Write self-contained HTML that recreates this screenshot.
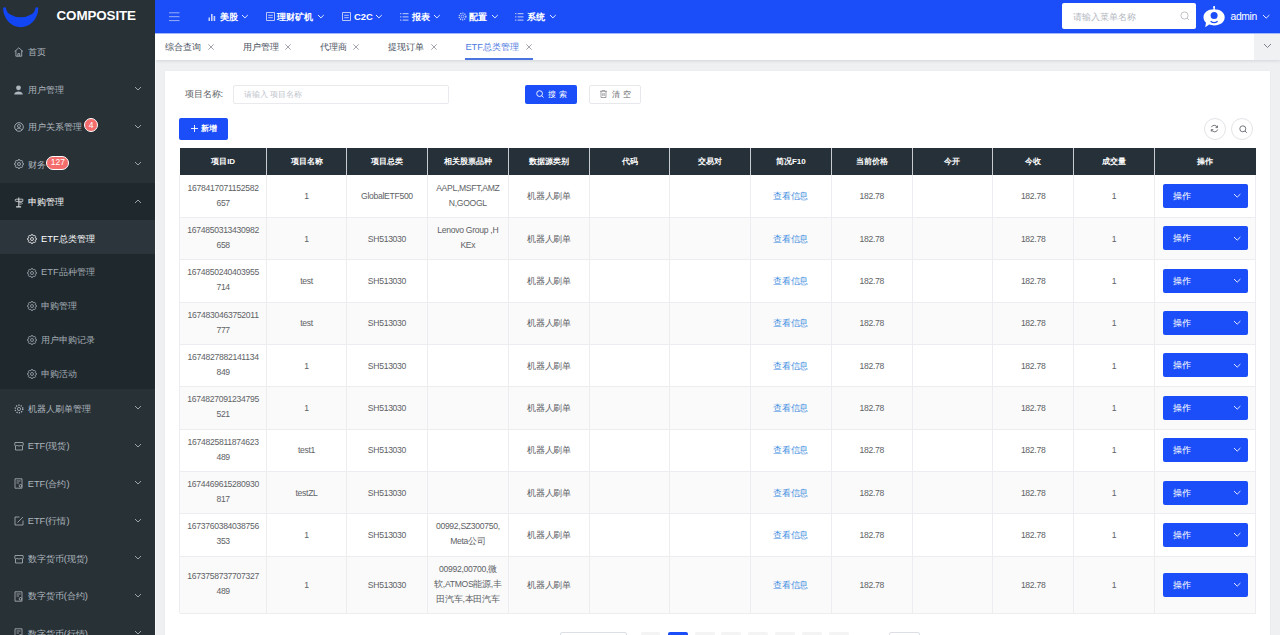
<!DOCTYPE html>
<html><head><meta charset="utf-8"><title>ETF总类管理</title>
<style>
html,body{margin:0;padding:0;}
body{width:1280px;height:635px;overflow:hidden;position:relative;background:#eef0f2;font-family:'Liberation Sans', sans-serif;}
</style></head><body>
<div id="side" style="position:absolute;left:0;top:0;width:155px;height:635px;background:#283136">
<div style="position:absolute;left:0;top:0;width:155px;height:33px;background:#283136"></div>
<svg style="position:absolute;left:0;top:0" width="42" height="32"><path d="M3.1,8 A17.6,19.2 0 0 0 38.3,8 C37.8,7 35.9,7 35.4,8 A14.7,9.3 0 0 1 6,8 C5.5,7 3.6,7 3.1,8 Z" fill="#1246f5"/></svg>
<div style="position:absolute;left:56.5px;top:8px;font:bold 13.4px/16px 'Liberation Sans', sans-serif;color:#fff;letter-spacing:-0.1px">COMPOSITE</div>
<svg style="position:absolute;left:14px;top:46.55px" width="10" height="10" viewBox="0 0 10 10"><path d="M0.6,4.6 L4.8,0.8 L9,4.6 M1.9,3.6 V9.2 H7.7 V3.6 M3.9,9.2 V6.6 H5.7 V9.2" fill="none" stroke="#aeb6be" stroke-width="0.85" stroke-linejoin="round"/></svg>
<div style="position:absolute;left:27.7px;top:46.15px;height:12px;font:normal 9.33px/12px 'Liberation Sans', sans-serif;color:#aeb6be;white-space:nowrap">首页</div>
<svg style="position:absolute;left:14px;top:84.55px" width="9" height="10" viewBox="0 0 9 10"><circle cx="4.5" cy="2.8" r="2.4" fill="#aeb6be"/><path d="M0.2,9.5 C0.2,5.5 8.8,5.5 8.8,9.5 Z" fill="#aeb6be"/></svg>
<div style="position:absolute;left:27.7px;top:83.64999999999999px;height:12px;font:normal 9.33px/12px 'Liberation Sans', sans-serif;color:#aeb6be;white-space:nowrap">用户管理</div>
<svg style="position:absolute;left:134.5px;top:87.25px;overflow:visible" width="6" height="3.0"><path d="M0,0 L3.0,3.0 L6,0" fill="none" stroke="#9aa3ab" stroke-width="1"/></svg>
<svg style="position:absolute;left:14px;top:122.05px" width="10" height="10" viewBox="0 0 10 10"><circle cx="5" cy="5" r="4.3" fill="none" stroke="#aeb6be" stroke-width="0.9"/><circle cx="5" cy="4" r="1.5" fill="none" stroke="#aeb6be" stroke-width="0.8"/><path d="M2.3,7.8 C3,5.8 7,5.8 7.7,7.8" fill="none" stroke="#aeb6be" stroke-width="0.8"/></svg>
<div style="position:absolute;left:27.7px;top:121.14999999999999px;height:12px;font:normal 9.33px/12px 'Liberation Sans', sans-serif;color:#aeb6be;white-space:nowrap">用户关系管理</div>
<svg style="position:absolute;left:134.5px;top:124.75px;overflow:visible" width="6" height="3.0"><path d="M0,0 L3.0,3.0 L6,0" fill="none" stroke="#9aa3ab" stroke-width="1"/></svg>
<svg style="position:absolute;left:14px;top:159.05px" width="10" height="10" viewBox="0 0 10 10"><path d="M8.63,4.28 L9.56,4.37 L9.56,5.63 L8.63,5.72 L8.08,7.06 L8.67,7.78 L7.78,8.67 L7.06,8.08 L5.72,8.63 L5.63,9.56 L4.37,9.56 L4.28,8.63 L2.94,8.08 L2.22,8.67 L1.33,7.78 L1.92,7.06 L1.37,5.72 L0.44,5.63 L0.44,4.37 L1.37,4.28 L1.92,2.94 L1.33,2.22 L2.22,1.33 L2.94,1.92 L4.28,1.37 L4.37,0.44 L5.63,0.44 L5.72,1.37 L7.06,1.92 L7.78,1.33 L8.67,2.22 L8.08,2.94 Z" fill="none" stroke="#aeb6be" stroke-width="0.85" stroke-linejoin="round"/><circle cx="5" cy="5" r="1.5" fill="none" stroke="#aeb6be" stroke-width="0.85"/></svg>
<div style="position:absolute;left:27.7px;top:158.65px;height:12px;font:normal 9.33px/12px 'Liberation Sans', sans-serif;color:#aeb6be;white-space:nowrap">财务</div>
<svg style="position:absolute;left:134.5px;top:162.25px;overflow:visible" width="6" height="3.0"><path d="M0,0 L3.0,3.0 L6,0" fill="none" stroke="#9aa3ab" stroke-width="1"/></svg>
<div style="position:absolute;left:84px;top:118.2px;width:12px;height:12px;border:1px solid #fff;border-radius:8px;background:#f56c6c;color:#fff;font:8.5px/12px 'Liberation Sans', sans-serif;text-align:center">4</div>
<div style="position:absolute;left:46.3px;top:156px;width:21px;height:11.6px;border:1px solid #fff;border-radius:7px;background:#f56c6c;color:#fff;font:8.5px/11.6px 'Liberation Sans', sans-serif;text-align:center">127</div>
<div style="position:absolute;left:0;top:182.8px;width:155px;height:37.5px;background:#1f282d"></div>
<svg style="position:absolute;left:14px;top:196.85000000000002px" width="10" height="11" viewBox="0 0 10 11"><path d="M0.8,3.3 L2,2.2 H8.8 V4.4 H2 Z" fill="none" stroke="#d5d9dd" stroke-width="0.8"/><path d="M4.3,0.5 H5.3 V9.5 H4.3 Z M2.1,9.3 H7.1 V10.6 H2.1 Z" fill="#d5d9dd"/><path d="M5.3,5.5 H7.5 L8.3,6.3 L7.5,7.1 H5.3" fill="none" stroke="#d5d9dd" stroke-width="0.7"/></svg>
<div style="position:absolute;left:27.7px;top:196.15px;height:12px;font:normal 9.33px/12px 'Liberation Sans', sans-serif;color:#fff;white-space:nowrap">申购管理</div>
<svg style="position:absolute;left:134.5px;top:199.55px;overflow:visible" width="6" height="3.0"><path d="M0,3.0 L3.0,0 L6,3.0" fill="none" stroke="#9aa3ab" stroke-width="1"/></svg>
<div style="position:absolute;left:0;top:220.3px;width:155px;height:169.0px;background:#1f282d"></div>
<div style="position:absolute;left:0;top:220.3px;width:155px;height:33.8px;background:#2c353b"></div>
<svg style="position:absolute;left:27.2px;top:233.70000000000002px" width="10" height="10" viewBox="0 0 10 10"><path d="M8.63,4.28 L9.56,4.37 L9.56,5.63 L8.63,5.72 L8.08,7.06 L8.67,7.78 L7.78,8.67 L7.06,8.08 L5.72,8.63 L5.63,9.56 L4.37,9.56 L4.28,8.63 L2.94,8.08 L2.22,8.67 L1.33,7.78 L1.92,7.06 L1.37,5.72 L0.44,5.63 L0.44,4.37 L1.37,4.28 L1.92,2.94 L1.33,2.22 L2.22,1.33 L2.94,1.92 L4.28,1.37 L4.37,0.44 L5.63,0.44 L5.72,1.37 L7.06,1.92 L7.78,1.33 L8.67,2.22 L8.08,2.94 Z" fill="none" stroke="#e8ebee" stroke-width="0.85" stroke-linejoin="round"/><circle cx="5" cy="5" r="1.5" fill="none" stroke="#e8ebee" stroke-width="0.85"/></svg>
<div style="position:absolute;left:41px;top:232.50000000000003px;height:12px;font:normal 9.33px/12px 'Liberation Sans', sans-serif;color:#ffffff;white-space:nowrap">ETF总类管理</div>
<svg style="position:absolute;left:27.2px;top:267.5px" width="10" height="10" viewBox="0 0 10 10"><path d="M8.63,4.28 L9.56,4.37 L9.56,5.63 L8.63,5.72 L8.08,7.06 L8.67,7.78 L7.78,8.67 L7.06,8.08 L5.72,8.63 L5.63,9.56 L4.37,9.56 L4.28,8.63 L2.94,8.08 L2.22,8.67 L1.33,7.78 L1.92,7.06 L1.37,5.72 L0.44,5.63 L0.44,4.37 L1.37,4.28 L1.92,2.94 L1.33,2.22 L2.22,1.33 L2.94,1.92 L4.28,1.37 L4.37,0.44 L5.63,0.44 L5.72,1.37 L7.06,1.92 L7.78,1.33 L8.67,2.22 L8.08,2.94 Z" fill="none" stroke="#9aa3ab" stroke-width="0.85" stroke-linejoin="round"/><circle cx="5" cy="5" r="1.5" fill="none" stroke="#9aa3ab" stroke-width="0.85"/></svg>
<div style="position:absolute;left:41px;top:266.3px;height:12px;font:normal 9.33px/12px 'Liberation Sans', sans-serif;color:#a4acb4;white-space:nowrap">ETF品种管理</div>
<svg style="position:absolute;left:27.2px;top:301.3px" width="10" height="10" viewBox="0 0 10 10"><path d="M8.63,4.28 L9.56,4.37 L9.56,5.63 L8.63,5.72 L8.08,7.06 L8.67,7.78 L7.78,8.67 L7.06,8.08 L5.72,8.63 L5.63,9.56 L4.37,9.56 L4.28,8.63 L2.94,8.08 L2.22,8.67 L1.33,7.78 L1.92,7.06 L1.37,5.72 L0.44,5.63 L0.44,4.37 L1.37,4.28 L1.92,2.94 L1.33,2.22 L2.22,1.33 L2.94,1.92 L4.28,1.37 L4.37,0.44 L5.63,0.44 L5.72,1.37 L7.06,1.92 L7.78,1.33 L8.67,2.22 L8.08,2.94 Z" fill="none" stroke="#9aa3ab" stroke-width="0.85" stroke-linejoin="round"/><circle cx="5" cy="5" r="1.5" fill="none" stroke="#9aa3ab" stroke-width="0.85"/></svg>
<div style="position:absolute;left:41px;top:300.1px;height:12px;font:normal 9.33px/12px 'Liberation Sans', sans-serif;color:#a4acb4;white-space:nowrap">申购管理</div>
<svg style="position:absolute;left:27.2px;top:335.1px" width="10" height="10" viewBox="0 0 10 10"><path d="M8.63,4.28 L9.56,4.37 L9.56,5.63 L8.63,5.72 L8.08,7.06 L8.67,7.78 L7.78,8.67 L7.06,8.08 L5.72,8.63 L5.63,9.56 L4.37,9.56 L4.28,8.63 L2.94,8.08 L2.22,8.67 L1.33,7.78 L1.92,7.06 L1.37,5.72 L0.44,5.63 L0.44,4.37 L1.37,4.28 L1.92,2.94 L1.33,2.22 L2.22,1.33 L2.94,1.92 L4.28,1.37 L4.37,0.44 L5.63,0.44 L5.72,1.37 L7.06,1.92 L7.78,1.33 L8.67,2.22 L8.08,2.94 Z" fill="none" stroke="#9aa3ab" stroke-width="0.85" stroke-linejoin="round"/><circle cx="5" cy="5" r="1.5" fill="none" stroke="#9aa3ab" stroke-width="0.85"/></svg>
<div style="position:absolute;left:41px;top:333.90000000000003px;height:12px;font:normal 9.33px/12px 'Liberation Sans', sans-serif;color:#a4acb4;white-space:nowrap">用户申购记录</div>
<svg style="position:absolute;left:27.2px;top:368.90000000000003px" width="10" height="10" viewBox="0 0 10 10"><path d="M8.63,4.28 L9.56,4.37 L9.56,5.63 L8.63,5.72 L8.08,7.06 L8.67,7.78 L7.78,8.67 L7.06,8.08 L5.72,8.63 L5.63,9.56 L4.37,9.56 L4.28,8.63 L2.94,8.08 L2.22,8.67 L1.33,7.78 L1.92,7.06 L1.37,5.72 L0.44,5.63 L0.44,4.37 L1.37,4.28 L1.92,2.94 L1.33,2.22 L2.22,1.33 L2.94,1.92 L4.28,1.37 L4.37,0.44 L5.63,0.44 L5.72,1.37 L7.06,1.92 L7.78,1.33 L8.67,2.22 L8.08,2.94 Z" fill="none" stroke="#9aa3ab" stroke-width="0.85" stroke-linejoin="round"/><circle cx="5" cy="5" r="1.5" fill="none" stroke="#9aa3ab" stroke-width="0.85"/></svg>
<div style="position:absolute;left:41px;top:367.70000000000005px;height:12px;font:normal 9.33px/12px 'Liberation Sans', sans-serif;color:#a4acb4;white-space:nowrap">申购活动</div>
<svg style="position:absolute;left:14px;top:403.55000000000007px" width="10" height="10" viewBox="0 0 10 10"><circle cx="5" cy="5" r="3.8" fill="none" stroke="#aeb6be" stroke-width="1.4" stroke-dasharray="1.2 1.2"/><circle cx="5" cy="5" r="1.6" fill="none" stroke="#aeb6be" stroke-width="0.8"/></svg>
<div style="position:absolute;left:27.7px;top:402.6500000000001px;height:12px;font:normal 9.33px/12px 'Liberation Sans', sans-serif;color:#aeb6be;white-space:nowrap">机器人刷单管理</div>
<svg style="position:absolute;left:134.5px;top:406.25000000000006px;overflow:visible" width="6" height="3.0"><path d="M0,0 L3.0,3.0 L6,0" fill="none" stroke="#9aa3ab" stroke-width="1"/></svg>
<svg style="position:absolute;left:14px;top:441.05000000000007px" width="10" height="10" viewBox="0 0 10 10"><path d="M1,1.5 H9 L9.3,4 C9.3,5 8,5.2 7,4.3 C6,5.2 4,5.2 3,4.3 C2,5.2 0.7,5 0.7,4 Z M1.5,5 V9 H8.5 V5" fill="none" stroke="#aeb6be" stroke-width="0.8"/></svg>
<div style="position:absolute;left:27.7px;top:440.1500000000001px;height:12px;font:normal 9.33px/12px 'Liberation Sans', sans-serif;color:#aeb6be;white-space:nowrap">ETF(现货)</div>
<svg style="position:absolute;left:134.5px;top:443.75000000000006px;overflow:visible" width="6" height="3.0"><path d="M0,0 L3.0,3.0 L6,0" fill="none" stroke="#9aa3ab" stroke-width="1"/></svg>
<svg style="position:absolute;left:14px;top:478.05000000000007px" width="10" height="11" viewBox="0 0 10 11"><path d="M1,0.8 H8 V10.2 H1 Z M2.5,3 H6.5 M2.5,5 H5" fill="none" stroke="#aeb6be" stroke-width="0.8"/><circle cx="6.5" cy="7.8" r="1.3" fill="none" stroke="#aeb6be" stroke-width="0.8"/></svg>
<div style="position:absolute;left:27.7px;top:477.6500000000001px;height:12px;font:normal 9.33px/12px 'Liberation Sans', sans-serif;color:#aeb6be;white-space:nowrap">ETF(合约)</div>
<svg style="position:absolute;left:134.5px;top:481.25000000000006px;overflow:visible" width="6" height="3.0"><path d="M0,0 L3.0,3.0 L6,0" fill="none" stroke="#9aa3ab" stroke-width="1"/></svg>
<svg style="position:absolute;left:14px;top:516.0500000000001px" width="10" height="10" viewBox="0 0 10 10"><path d="M5.5,1 H1 V9 H9 V4.5 M3.5,6.5 L9,1" fill="none" stroke="#aeb6be" stroke-width="0.8"/></svg>
<div style="position:absolute;left:27.7px;top:515.1500000000001px;height:12px;font:normal 9.33px/12px 'Liberation Sans', sans-serif;color:#aeb6be;white-space:nowrap">ETF(行情)</div>
<svg style="position:absolute;left:134.5px;top:518.7500000000001px;overflow:visible" width="6" height="3.0"><path d="M0,0 L3.0,3.0 L6,0" fill="none" stroke="#9aa3ab" stroke-width="1"/></svg>
<svg style="position:absolute;left:14px;top:553.5500000000001px" width="10" height="10" viewBox="0 0 10 10"><path d="M1,1.5 H9 L9.3,4 C9.3,5 8,5.2 7,4.3 C6,5.2 4,5.2 3,4.3 C2,5.2 0.7,5 0.7,4 Z M1.5,5 V9 H8.5 V5" fill="none" stroke="#aeb6be" stroke-width="0.8"/></svg>
<div style="position:absolute;left:27.7px;top:552.6500000000001px;height:12px;font:normal 9.33px/12px 'Liberation Sans', sans-serif;color:#aeb6be;white-space:nowrap">数字货币(现货)</div>
<svg style="position:absolute;left:134.5px;top:556.2500000000001px;overflow:visible" width="6" height="3.0"><path d="M0,0 L3.0,3.0 L6,0" fill="none" stroke="#9aa3ab" stroke-width="1"/></svg>
<svg style="position:absolute;left:14px;top:590.5500000000001px" width="10" height="11" viewBox="0 0 10 11"><path d="M1,0.8 H8 V10.2 H1 Z M2.5,3 H6.5 M2.5,5 H5" fill="none" stroke="#aeb6be" stroke-width="0.8"/><circle cx="6.5" cy="7.8" r="1.3" fill="none" stroke="#aeb6be" stroke-width="0.8"/></svg>
<div style="position:absolute;left:27.7px;top:590.1500000000001px;height:12px;font:normal 9.33px/12px 'Liberation Sans', sans-serif;color:#aeb6be;white-space:nowrap">数字货币(合约)</div>
<svg style="position:absolute;left:134.5px;top:593.7500000000001px;overflow:visible" width="6" height="3.0"><path d="M0,0 L3.0,3.0 L6,0" fill="none" stroke="#9aa3ab" stroke-width="1"/></svg>
<svg style="position:absolute;left:14px;top:628.0500000000001px" width="10" height="11" viewBox="0 0 10 11"><path d="M1,0.8 H8 V10.2 H1 Z M2.5,3 H6.5 M2.5,5 H5" fill="none" stroke="#aeb6be" stroke-width="0.8"/><circle cx="6.5" cy="7.8" r="1.3" fill="none" stroke="#aeb6be" stroke-width="0.8"/></svg>
<div style="position:absolute;left:27.7px;top:627.6500000000001px;height:12px;font:normal 9.33px/12px 'Liberation Sans', sans-serif;color:#aeb6be;white-space:nowrap">数字货币(行情)</div>
<svg style="position:absolute;left:134.5px;top:631.2500000000001px;overflow:visible" width="6" height="3.0"><path d="M0,0 L3.0,3.0 L6,0" fill="none" stroke="#9aa3ab" stroke-width="1"/></svg>
</div>
<div style="position:absolute;left:155px;top:0;width:1125px;height:33px;background:#1b4ef9"></div>
<svg style="position:absolute;left:169px;top:12px" width="11" height="10"><path d="M0,0.8 H10.5 M0,4.7 H10.5 M0,8.6 H10.5" stroke="#a9b9f6" stroke-width="0.9"/></svg>
<svg style="position:absolute;left:208px;top:12.5px" width="8" height="8"><path d="M0.5,8 V4.5 H2 V8 M3,8 V1 H4.6 V8 M5.6,8 V3 H7.2 V8" fill="#c9d3f7"/></svg>
<div style="position:absolute;left:219.7px;top:10.5px;font:bold 9.4px/12px 'Liberation Sans', sans-serif;color:#fff;white-space:nowrap">美股</div>
<svg style="position:absolute;left:241.6px;top:14.6px;overflow:visible" width="5.8" height="2.9"><path d="M0,0 L2.9,2.9 L5.8,0" fill="none" stroke="#e6ebfd" stroke-width="1"/></svg>
<svg style="position:absolute;left:266.3px;top:12px" width="9" height="9"><path d="M0.5,0.5 H8.5 V8.5 H0.5 Z M2.2,3.3 H6.8 M2.2,5.7 H6.8" fill="none" stroke="#c9d3f7" stroke-width="0.9"/></svg>
<div style="position:absolute;left:277.2px;top:10.5px;font:bold 9.4px/12px 'Liberation Sans', sans-serif;color:#fff;white-space:nowrap">理财矿机</div>
<svg style="position:absolute;left:318.4px;top:14.6px;overflow:visible" width="5.8" height="2.9"><path d="M0,0 L2.9,2.9 L5.8,0" fill="none" stroke="#e6ebfd" stroke-width="1"/></svg>
<svg style="position:absolute;left:342.3px;top:12px" width="9" height="9"><path d="M0.5,0.5 H8.5 V8.5 H0.5 Z M2.2,3.3 H6.8 M2.2,5.7 H6.8" fill="none" stroke="#c9d3f7" stroke-width="0.9"/></svg>
<div style="position:absolute;left:354px;top:10.5px;font:bold 9.4px/12px 'Liberation Sans', sans-serif;color:#fff;white-space:nowrap">C2C</div>
<svg style="position:absolute;left:376px;top:14.6px;overflow:visible" width="5.8" height="2.9"><path d="M0,0 L2.9,2.9 L5.8,0" fill="none" stroke="#e6ebfd" stroke-width="1"/></svg>
<svg style="position:absolute;left:400.3px;top:12.5px" width="9" height="8"><path d="M0,0.7 H1.4 M2.6,0.7 H8.5 M0,3.9 H1.4 M2.6,3.9 H8.5 M0,7.1 H1.4 M2.6,7.1 H8.5" fill="none" stroke="#c9d3f7" stroke-width="1"/></svg>
<div style="position:absolute;left:412px;top:10.5px;font:bold 9.4px/12px 'Liberation Sans', sans-serif;color:#fff;white-space:nowrap">报表</div>
<svg style="position:absolute;left:434px;top:14.6px;overflow:visible" width="5.8" height="2.9"><path d="M0,0 L2.9,2.9 L5.8,0" fill="none" stroke="#e6ebfd" stroke-width="1"/></svg>
<svg style="position:absolute;left:458px;top:12px" width="9" height="9" viewBox="0 0 10 10"><circle cx="5" cy="5" r="3.7" fill="none" stroke="#c9d3f7" stroke-width="1.5" stroke-dasharray="1.3 1.1"/><circle cx="5" cy="5" r="1.6" fill="none" stroke="#c9d3f7" stroke-width="0.8"/></svg>
<div style="position:absolute;left:469.4px;top:10.5px;font:bold 9.4px/12px 'Liberation Sans', sans-serif;color:#fff;white-space:nowrap">配置</div>
<svg style="position:absolute;left:491.7px;top:14.6px;overflow:visible" width="5.8" height="2.9"><path d="M0,0 L2.9,2.9 L5.8,0" fill="none" stroke="#e6ebfd" stroke-width="1"/></svg>
<svg style="position:absolute;left:515.2px;top:12.5px" width="9" height="8"><path d="M0,0.7 H1.4 M2.6,0.7 H8.5 M0,3.9 H1.4 M2.6,3.9 H8.5 M0,7.1 H1.4 M2.6,7.1 H8.5" fill="none" stroke="#c9d3f7" stroke-width="1"/></svg>
<div style="position:absolute;left:526.9px;top:10.5px;font:bold 9.4px/12px 'Liberation Sans', sans-serif;color:#fff;white-space:nowrap">系统</div>
<svg style="position:absolute;left:549.5px;top:14.6px;overflow:visible" width="5.8" height="2.9"><path d="M0,0 L2.9,2.9 L5.8,0" fill="none" stroke="#e6ebfd" stroke-width="1"/></svg>
<div style="position:absolute;left:1062.2px;top:2.7px;width:134.3px;height:26.6px;background:#fff;border-radius:2px"></div>
<div style="position:absolute;left:1073.4px;top:10.5px;font:9.33px/12px 'Liberation Sans', sans-serif;color:#b4b8bf;white-space:nowrap">请输入菜单名称</div>
<svg style="position:absolute;left:1179.5px;top:11.3px" width="10" height="10"><circle cx="4.5" cy="4.5" r="3.6" fill="none" stroke="#b8bcc3" stroke-width="0.9"/><path d="M7.1,7.1 L9,9" stroke="#b8bcc3" stroke-width="0.9"/></svg>
<svg style="position:absolute;left:1202.5px;top:5.5px" width="23" height="22" viewBox="0 0 23 22"><path d="M11.1,0.8 V4" stroke="#fff" stroke-width="1.4"/><circle cx="11.1" cy="1" r="1" fill="#fff"/><path d="M11.1,3.2 C17.3,3.2 21.7,6.5 21.7,11.3 C21.7,16.2 17.3,19.4 11.1,19.4 C9.3,19.4 7.6,19.1 6.2,18.6 L2.2,21.2 L3,16.8 C1.4,15.3 0.5,13.5 0.5,11.3 C0.5,6.5 4.9,3.2 11.1,3.2 Z" fill="#fff"/><circle cx="11.1" cy="9.6" r="3.5" fill="#1b4ef9"/><path d="M7.6,15.2 C9.6,16.8 12.6,16.8 14.6,15.2" fill="none" stroke="#1b4ef9" stroke-width="1.3"/></svg>
<div style="position:absolute;left:1230.6px;top:10.5px;font:10.3px/12px 'Liberation Sans', sans-serif;color:#fff;letter-spacing:-0.35px">admin</div>
<svg style="position:absolute;left:1263px;top:15px;overflow:visible" width="6.4" height="3.2"><path d="M0,0 L3.2,3.2 L6.4,0" fill="none" stroke="#e6ebfd" stroke-width="1"/></svg>
<div style="position:absolute;left:155px;top:33px;width:1125px;height:27px;background:#fff;box-shadow:0 1px 3px rgba(0,21,41,0.12)"></div>
<div style="position:absolute;left:155px;top:33px;width:1125px;height:1px;background:rgba(28,78,250,0.4)"></div>
<div style="position:absolute;left:1254px;top:34px;width:26px;height:26px;background:#eff1f3"></div>
<svg style="position:absolute;left:1263.6px;top:43.8px;overflow:visible" width="7" height="3.5"><path d="M0,0 L3.5,3.5 L7,0" fill="none" stroke="#7d828a" stroke-width="1"/></svg>
<div style="position:absolute;left:164.9px;top:40.9px;font:9.33px/12px 'Liberation Sans', sans-serif;color:#495060;white-space:nowrap">综合查询</div>
<svg style="position:absolute;left:208px;top:44px" width="6" height="6"><path d="M0.3,0.3 L5.7,5.7 M5.7,0.3 L0.3,5.7" stroke="#8a8f97" stroke-width="0.8"/></svg>
<div style="position:absolute;left:242.6px;top:40.9px;font:9.33px/12px 'Liberation Sans', sans-serif;color:#495060;white-space:nowrap">用户管理</div>
<svg style="position:absolute;left:285.4px;top:44px" width="6" height="6"><path d="M0.3,0.3 L5.7,5.7 M5.7,0.3 L0.3,5.7" stroke="#8a8f97" stroke-width="0.8"/></svg>
<div style="position:absolute;left:319.7px;top:40.9px;font:9.33px/12px 'Liberation Sans', sans-serif;color:#495060;white-space:nowrap">代理商</div>
<svg style="position:absolute;left:353.4px;top:44px" width="6" height="6"><path d="M0.3,0.3 L5.7,5.7 M5.7,0.3 L0.3,5.7" stroke="#8a8f97" stroke-width="0.8"/></svg>
<div style="position:absolute;left:388px;top:40.9px;font:9.33px/12px 'Liberation Sans', sans-serif;color:#495060;white-space:nowrap">提现订单</div>
<svg style="position:absolute;left:430.7px;top:44px" width="6" height="6"><path d="M0.3,0.3 L5.7,5.7 M5.7,0.3 L0.3,5.7" stroke="#8a8f97" stroke-width="0.8"/></svg>
<div style="position:absolute;left:465.4px;top:40.9px;font:9.33px/12px 'Liberation Sans', sans-serif;color:#4f7be0;white-space:nowrap">ETF总类管理</div>
<svg style="position:absolute;left:525.6px;top:44px" width="6" height="6"><path d="M0.3,0.3 L5.7,5.7 M5.7,0.3 L0.3,5.7" stroke="#8a8f97" stroke-width="0.8"/></svg>
<div style="position:absolute;left:465px;top:58px;width:68px;height:2px;background:#4a74de"></div>
<div style="position:absolute;left:155px;top:60px;width:1.2px;height:575px;background:#f7f8f9"></div>
<div style="position:absolute;left:165.3px;top:70.8px;width:1104.7px;height:580px;background:#fff;box-shadow:0 0 1.5px rgba(0,0,0,0.06)"></div>
<div style="position:absolute;left:184.6px;top:88px;font:9.33px/12px 'Liberation Sans', sans-serif;color:#606266;white-space:nowrap">项目名称:</div>
<div style="position:absolute;left:233px;top:84.7px;width:213.7px;height:17.8px;border:1px solid #e8eaed;border-radius:2px;background:#fff"></div>
<div style="position:absolute;left:244px;top:88.5px;font:8px/11px 'Liberation Sans', sans-serif;color:#c0c4cc;white-space:nowrap">请输入 项目名称</div>
<div style="position:absolute;left:525px;top:84.7px;width:51.7px;height:19.3px;background:#1b4ef9;border-radius:2px"></div>
<svg style="position:absolute;left:536.2px;top:90px" width="8" height="8"><circle cx="3.6" cy="3.6" r="2.9" fill="none" stroke="#fff" stroke-width="0.9"/><path d="M5.7,5.7 L7.5,7.5" stroke="#fff" stroke-width="0.9"/></svg>
<div style="position:absolute;left:547.5px;top:88.5px;font:8px/11px 'Liberation Sans', sans-serif;color:#fff;letter-spacing:3px;white-space:nowrap">搜索</div>
<div style="position:absolute;left:589.3px;top:84.7px;width:49.4px;height:17.3px;border:1px solid #e6e8eb;border-radius:2px;background:#fff"></div>
<svg style="position:absolute;left:600.4px;top:89.6px" width="7" height="8"><path d="M0,1.3 H7 M2.3,1.3 V0.3 H4.7 V1.3 M1,1.3 V7.5 H6 V1.3 M2.8,3 V6 M4.2,3 V6" fill="none" stroke="#7a7d82" stroke-width="0.7"/></svg>
<div style="position:absolute;left:611.6px;top:88.5px;font:8px/11px 'Liberation Sans', sans-serif;color:#606266;letter-spacing:3px;white-space:nowrap">清空</div>
<div style="position:absolute;left:179.1px;top:117.8px;width:48.8px;height:22px;background:#1b4ef9;border-radius:2px"></div>
<svg style="position:absolute;left:190.8px;top:125px" width="7" height="7"><path d="M3.5,0 V7 M0,3.5 H7" stroke="#fff" stroke-width="0.9"/></svg>
<div style="position:absolute;left:200.9px;top:123.3px;font:bold 8.1px/11px 'Liberation Sans', sans-serif;color:#fff;white-space:nowrap">新增</div>
<div style="position:absolute;left:1203.5px;top:117.5px;width:20px;height:20px;border:1px solid #e2e4e7;border-radius:50%"></div>
<svg style="position:absolute;left:1210px;top:124px" width="9" height="9"><path d="M1.3,3.2 A3.3,3.3 0 0 1 7.3,3.3 M7.7,5.6 A3.3,3.3 0 0 1 1.5,5.8" fill="none" stroke="#5a5e66" stroke-width="0.85"/><path d="M7.5,1.6 V3.6 H5.5" fill="none" stroke="#5a5e66" stroke-width="0.85"/><path d="M1.3,7.6 V5.6 H3.3" fill="none" stroke="#5a5e66" stroke-width="0.85"/></svg>
<div style="position:absolute;left:1231px;top:117.5px;width:20px;height:20px;border:1px solid #e2e4e7;border-radius:50%"></div>
<svg style="position:absolute;left:1238.5px;top:124.5px" width="9" height="9"><circle cx="3.8" cy="3.8" r="3" fill="none" stroke="#5a5e66" stroke-width="0.85"/><path d="M6,6 L7.8,7.8" stroke="#5a5e66" stroke-width="0.85"/></svg>
<div style="position:absolute;left:179.8px;top:148.4px;width:1075.9px;height:26.299999999999983px;background:#263038"></div>
<div style="position:absolute;left:179.8px;top:149.20000000000002px;width:86.69999999999999px;height:26.299999999999983px;font:bold 8px/26.299999999999983px 'Liberation Sans', sans-serif;color:#fff;text-align:center;white-space:nowrap">项目ID</div>
<div style="position:absolute;left:266.5px;top:149.20000000000002px;width:80.10000000000002px;height:26.299999999999983px;font:bold 8px/26.299999999999983px 'Liberation Sans', sans-serif;color:#fff;text-align:center;white-space:nowrap">项目名称</div>
<div style="position:absolute;left:266.0px;top:148.4px;width:1px;height:26.299999999999983px;background:#c8ccd1"></div>
<div style="position:absolute;left:346.6px;top:149.20000000000002px;width:80.69999999999999px;height:26.299999999999983px;font:bold 8px/26.299999999999983px 'Liberation Sans', sans-serif;color:#fff;text-align:center;white-space:nowrap">项目总类</div>
<div style="position:absolute;left:346.1px;top:148.4px;width:1px;height:26.299999999999983px;background:#c8ccd1"></div>
<div style="position:absolute;left:427.3px;top:149.20000000000002px;width:81.09999999999997px;height:26.299999999999983px;font:bold 8px/26.299999999999983px 'Liberation Sans', sans-serif;color:#fff;text-align:center;white-space:nowrap">相关股票品种</div>
<div style="position:absolute;left:426.8px;top:148.4px;width:1px;height:26.299999999999983px;background:#c8ccd1"></div>
<div style="position:absolute;left:508.4px;top:149.20000000000002px;width:81.0px;height:26.299999999999983px;font:bold 8px/26.299999999999983px 'Liberation Sans', sans-serif;color:#fff;text-align:center;white-space:nowrap">数据源类别</div>
<div style="position:absolute;left:507.9px;top:148.4px;width:1px;height:26.299999999999983px;background:#c8ccd1"></div>
<div style="position:absolute;left:589.4px;top:149.20000000000002px;width:80.5px;height:26.299999999999983px;font:bold 8px/26.299999999999983px 'Liberation Sans', sans-serif;color:#fff;text-align:center;white-space:nowrap">代码</div>
<div style="position:absolute;left:588.9px;top:148.4px;width:1px;height:26.299999999999983px;background:#c8ccd1"></div>
<div style="position:absolute;left:669.9px;top:149.20000000000002px;width:80.39999999999998px;height:26.299999999999983px;font:bold 8px/26.299999999999983px 'Liberation Sans', sans-serif;color:#fff;text-align:center;white-space:nowrap">交易对</div>
<div style="position:absolute;left:669.4px;top:148.4px;width:1px;height:26.299999999999983px;background:#c8ccd1"></div>
<div style="position:absolute;left:750.3px;top:149.20000000000002px;width:81.0px;height:26.299999999999983px;font:bold 8px/26.299999999999983px 'Liberation Sans', sans-serif;color:#fff;text-align:center;white-space:nowrap">简况F10</div>
<div style="position:absolute;left:749.8px;top:148.4px;width:1px;height:26.299999999999983px;background:#c8ccd1"></div>
<div style="position:absolute;left:831.3px;top:149.20000000000002px;width:80.80000000000007px;height:26.299999999999983px;font:bold 8px/26.299999999999983px 'Liberation Sans', sans-serif;color:#fff;text-align:center;white-space:nowrap">当前价格</div>
<div style="position:absolute;left:830.8px;top:148.4px;width:1px;height:26.299999999999983px;background:#c8ccd1"></div>
<div style="position:absolute;left:912.1px;top:149.20000000000002px;width:80.69999999999993px;height:26.299999999999983px;font:bold 8px/26.299999999999983px 'Liberation Sans', sans-serif;color:#fff;text-align:center;white-space:nowrap">今开</div>
<div style="position:absolute;left:911.6px;top:148.4px;width:1px;height:26.299999999999983px;background:#c8ccd1"></div>
<div style="position:absolute;left:992.8px;top:149.20000000000002px;width:80.70000000000005px;height:26.299999999999983px;font:bold 8px/26.299999999999983px 'Liberation Sans', sans-serif;color:#fff;text-align:center;white-space:nowrap">今收</div>
<div style="position:absolute;left:992.3px;top:148.4px;width:1px;height:26.299999999999983px;background:#c8ccd1"></div>
<div style="position:absolute;left:1073.5px;top:149.20000000000002px;width:81.0px;height:26.299999999999983px;font:bold 8px/26.299999999999983px 'Liberation Sans', sans-serif;color:#fff;text-align:center;white-space:nowrap">成交量</div>
<div style="position:absolute;left:1073.0px;top:148.4px;width:1px;height:26.299999999999983px;background:#c8ccd1"></div>
<div style="position:absolute;left:1154.5px;top:149.20000000000002px;width:101.20000000000005px;height:26.299999999999983px;font:bold 8px/26.299999999999983px 'Liberation Sans', sans-serif;color:#fff;text-align:center;white-space:nowrap">操作</div>
<div style="position:absolute;left:1154.0px;top:148.4px;width:1px;height:26.299999999999983px;background:#c8ccd1"></div>
<div style="position:absolute;left:179.8px;top:174.7px;width:1075.9px;height:42.35px;background:#fff"></div>
<div style="position:absolute;left:179.8px;top:174.5px;width:86.69999999999999px;height:42.35px;display:flex;align-items:center;justify-content:center;text-align:center;font:8.6px/15px 'Liberation Sans', sans-serif;letter-spacing:-0.3px;color:#606266;white-space:nowrap">1678417071152582<br>657</div>
<div style="position:absolute;left:266.0px;top:174.7px;width:1px;height:42.35px;background:#ebedf0"></div>
<div style="position:absolute;left:266.5px;top:175.5px;width:80.10000000000002px;height:42.35px;display:flex;align-items:center;justify-content:center;text-align:center;font:8.6px/15px 'Liberation Sans', sans-serif;letter-spacing:-0.3px;color:#606266;white-space:nowrap">1</div>
<div style="position:absolute;left:346.1px;top:174.7px;width:1px;height:42.35px;background:#ebedf0"></div>
<div style="position:absolute;left:346.6px;top:175.5px;width:80.69999999999999px;height:42.35px;display:flex;align-items:center;justify-content:center;text-align:center;font:8.6px/15px 'Liberation Sans', sans-serif;letter-spacing:-0.3px;color:#606266;white-space:nowrap">GlobalETF500</div>
<div style="position:absolute;left:426.8px;top:174.7px;width:1px;height:42.35px;background:#ebedf0"></div>
<div style="position:absolute;left:427.3px;top:174.5px;width:81.09999999999997px;height:42.35px;display:flex;align-items:center;justify-content:center;text-align:center;font:8.6px/15px 'Liberation Sans', sans-serif;letter-spacing:-0.3px;color:#606266;white-space:nowrap">AAPL,MSFT,AMZ<br>N,GOOGL</div>
<div style="position:absolute;left:507.9px;top:174.7px;width:1px;height:42.35px;background:#ebedf0"></div>
<div style="position:absolute;left:508.4px;top:175.5px;width:81.0px;height:42.35px;display:flex;align-items:center;justify-content:center;text-align:center;font:8.6px/15px 'Liberation Sans', sans-serif;letter-spacing:-0.3px;color:#606266;white-space:nowrap">机器人刷单</div>
<div style="position:absolute;left:588.9px;top:174.7px;width:1px;height:42.35px;background:#ebedf0"></div>
<div style="position:absolute;left:669.4px;top:174.7px;width:1px;height:42.35px;background:#ebedf0"></div>
<div style="position:absolute;left:749.8px;top:174.7px;width:1px;height:42.35px;background:#ebedf0"></div>
<div style="position:absolute;left:750.3px;top:175.5px;width:81.0px;height:42.35px;display:flex;align-items:center;justify-content:center;text-align:center;font:8.6px/15px 'Liberation Sans', sans-serif;letter-spacing:-0.3px;color:#3d8ce0;white-space:nowrap">查看信息</div>
<div style="position:absolute;left:830.8px;top:174.7px;width:1px;height:42.35px;background:#ebedf0"></div>
<div style="position:absolute;left:831.3px;top:175.5px;width:80.80000000000007px;height:42.35px;display:flex;align-items:center;justify-content:center;text-align:center;font:8.6px/15px 'Liberation Sans', sans-serif;letter-spacing:-0.3px;color:#606266;white-space:nowrap">182.78</div>
<div style="position:absolute;left:911.6px;top:174.7px;width:1px;height:42.35px;background:#ebedf0"></div>
<div style="position:absolute;left:992.3px;top:174.7px;width:1px;height:42.35px;background:#ebedf0"></div>
<div style="position:absolute;left:992.8px;top:175.5px;width:80.70000000000005px;height:42.35px;display:flex;align-items:center;justify-content:center;text-align:center;font:8.6px/15px 'Liberation Sans', sans-serif;letter-spacing:-0.3px;color:#606266;white-space:nowrap">182.78</div>
<div style="position:absolute;left:1073.0px;top:174.7px;width:1px;height:42.35px;background:#ebedf0"></div>
<div style="position:absolute;left:1073.5px;top:175.5px;width:81.0px;height:42.35px;display:flex;align-items:center;justify-content:center;text-align:center;font:8.6px/15px 'Liberation Sans', sans-serif;letter-spacing:-0.3px;color:#606266;white-space:nowrap">1</div>
<div style="position:absolute;left:1154.0px;top:174.7px;width:1px;height:42.35px;background:#ebedf0"></div>
<div style="position:absolute;left:1163px;top:184.075px;width:85.2px;height:24px;background:#1b4ef9;border-radius:2px"></div>
<div style="position:absolute;left:1173.4px;top:190.075px;font:9.4px/12px 'Liberation Sans', sans-serif;color:#fff;white-space:nowrap">操作</div>
<svg style="position:absolute;left:1234.3px;top:194.375px;overflow:visible" width="6.4" height="3.2"><path d="M0,0 L3.2,3.2 L6.4,0" fill="none" stroke="#dfe6fd" stroke-width="1"/></svg>
<div style="position:absolute;left:179.8px;top:217.04999999999998px;width:1075.9px;height:42.35px;background:#fafafa"></div>
<div style="position:absolute;left:179.8px;top:216.85px;width:86.69999999999999px;height:42.35px;display:flex;align-items:center;justify-content:center;text-align:center;font:8.6px/15px 'Liberation Sans', sans-serif;letter-spacing:-0.3px;color:#606266;white-space:nowrap">1674850313430982<br>658</div>
<div style="position:absolute;left:266.0px;top:217.04999999999998px;width:1px;height:42.35px;background:#ebedf0"></div>
<div style="position:absolute;left:266.5px;top:217.85px;width:80.10000000000002px;height:42.35px;display:flex;align-items:center;justify-content:center;text-align:center;font:8.6px/15px 'Liberation Sans', sans-serif;letter-spacing:-0.3px;color:#606266;white-space:nowrap">1</div>
<div style="position:absolute;left:346.1px;top:217.04999999999998px;width:1px;height:42.35px;background:#ebedf0"></div>
<div style="position:absolute;left:346.6px;top:217.85px;width:80.69999999999999px;height:42.35px;display:flex;align-items:center;justify-content:center;text-align:center;font:8.6px/15px 'Liberation Sans', sans-serif;letter-spacing:-0.3px;color:#606266;white-space:nowrap">SH513030</div>
<div style="position:absolute;left:426.8px;top:217.04999999999998px;width:1px;height:42.35px;background:#ebedf0"></div>
<div style="position:absolute;left:427.3px;top:216.85px;width:81.09999999999997px;height:42.35px;display:flex;align-items:center;justify-content:center;text-align:center;font:8.6px/15px 'Liberation Sans', sans-serif;letter-spacing:-0.3px;color:#606266;white-space:nowrap">Lenovo Group ,H<br>KEx</div>
<div style="position:absolute;left:507.9px;top:217.04999999999998px;width:1px;height:42.35px;background:#ebedf0"></div>
<div style="position:absolute;left:508.4px;top:217.85px;width:81.0px;height:42.35px;display:flex;align-items:center;justify-content:center;text-align:center;font:8.6px/15px 'Liberation Sans', sans-serif;letter-spacing:-0.3px;color:#606266;white-space:nowrap">机器人刷单</div>
<div style="position:absolute;left:588.9px;top:217.04999999999998px;width:1px;height:42.35px;background:#ebedf0"></div>
<div style="position:absolute;left:669.4px;top:217.04999999999998px;width:1px;height:42.35px;background:#ebedf0"></div>
<div style="position:absolute;left:749.8px;top:217.04999999999998px;width:1px;height:42.35px;background:#ebedf0"></div>
<div style="position:absolute;left:750.3px;top:217.85px;width:81.0px;height:42.35px;display:flex;align-items:center;justify-content:center;text-align:center;font:8.6px/15px 'Liberation Sans', sans-serif;letter-spacing:-0.3px;color:#3d8ce0;white-space:nowrap">查看信息</div>
<div style="position:absolute;left:830.8px;top:217.04999999999998px;width:1px;height:42.35px;background:#ebedf0"></div>
<div style="position:absolute;left:831.3px;top:217.85px;width:80.80000000000007px;height:42.35px;display:flex;align-items:center;justify-content:center;text-align:center;font:8.6px/15px 'Liberation Sans', sans-serif;letter-spacing:-0.3px;color:#606266;white-space:nowrap">182.78</div>
<div style="position:absolute;left:911.6px;top:217.04999999999998px;width:1px;height:42.35px;background:#ebedf0"></div>
<div style="position:absolute;left:992.3px;top:217.04999999999998px;width:1px;height:42.35px;background:#ebedf0"></div>
<div style="position:absolute;left:992.8px;top:217.85px;width:80.70000000000005px;height:42.35px;display:flex;align-items:center;justify-content:center;text-align:center;font:8.6px/15px 'Liberation Sans', sans-serif;letter-spacing:-0.3px;color:#606266;white-space:nowrap">182.78</div>
<div style="position:absolute;left:1073.0px;top:217.04999999999998px;width:1px;height:42.35px;background:#ebedf0"></div>
<div style="position:absolute;left:1073.5px;top:217.85px;width:81.0px;height:42.35px;display:flex;align-items:center;justify-content:center;text-align:center;font:8.6px/15px 'Liberation Sans', sans-serif;letter-spacing:-0.3px;color:#606266;white-space:nowrap">1</div>
<div style="position:absolute;left:1154.0px;top:217.04999999999998px;width:1px;height:42.35px;background:#ebedf0"></div>
<div style="position:absolute;left:1163px;top:226.42499999999998px;width:85.2px;height:24px;background:#1b4ef9;border-radius:2px"></div>
<div style="position:absolute;left:1173.4px;top:232.42499999999998px;font:9.4px/12px 'Liberation Sans', sans-serif;color:#fff;white-space:nowrap">操作</div>
<svg style="position:absolute;left:1234.3px;top:236.725px;overflow:visible" width="6.4" height="3.2"><path d="M0,0 L3.2,3.2 L6.4,0" fill="none" stroke="#dfe6fd" stroke-width="1"/></svg>
<div style="position:absolute;left:179.8px;top:259.4px;width:1075.9px;height:42.35px;background:#fff"></div>
<div style="position:absolute;left:179.8px;top:259.2px;width:86.69999999999999px;height:42.35px;display:flex;align-items:center;justify-content:center;text-align:center;font:8.6px/15px 'Liberation Sans', sans-serif;letter-spacing:-0.3px;color:#606266;white-space:nowrap">1674850240403955<br>714</div>
<div style="position:absolute;left:266.0px;top:259.4px;width:1px;height:42.35px;background:#ebedf0"></div>
<div style="position:absolute;left:266.5px;top:260.2px;width:80.10000000000002px;height:42.35px;display:flex;align-items:center;justify-content:center;text-align:center;font:8.6px/15px 'Liberation Sans', sans-serif;letter-spacing:-0.3px;color:#606266;white-space:nowrap">test</div>
<div style="position:absolute;left:346.1px;top:259.4px;width:1px;height:42.35px;background:#ebedf0"></div>
<div style="position:absolute;left:346.6px;top:260.2px;width:80.69999999999999px;height:42.35px;display:flex;align-items:center;justify-content:center;text-align:center;font:8.6px/15px 'Liberation Sans', sans-serif;letter-spacing:-0.3px;color:#606266;white-space:nowrap">SH513030</div>
<div style="position:absolute;left:426.8px;top:259.4px;width:1px;height:42.35px;background:#ebedf0"></div>
<div style="position:absolute;left:507.9px;top:259.4px;width:1px;height:42.35px;background:#ebedf0"></div>
<div style="position:absolute;left:508.4px;top:260.2px;width:81.0px;height:42.35px;display:flex;align-items:center;justify-content:center;text-align:center;font:8.6px/15px 'Liberation Sans', sans-serif;letter-spacing:-0.3px;color:#606266;white-space:nowrap">机器人刷单</div>
<div style="position:absolute;left:588.9px;top:259.4px;width:1px;height:42.35px;background:#ebedf0"></div>
<div style="position:absolute;left:669.4px;top:259.4px;width:1px;height:42.35px;background:#ebedf0"></div>
<div style="position:absolute;left:749.8px;top:259.4px;width:1px;height:42.35px;background:#ebedf0"></div>
<div style="position:absolute;left:750.3px;top:260.2px;width:81.0px;height:42.35px;display:flex;align-items:center;justify-content:center;text-align:center;font:8.6px/15px 'Liberation Sans', sans-serif;letter-spacing:-0.3px;color:#3d8ce0;white-space:nowrap">查看信息</div>
<div style="position:absolute;left:830.8px;top:259.4px;width:1px;height:42.35px;background:#ebedf0"></div>
<div style="position:absolute;left:831.3px;top:260.2px;width:80.80000000000007px;height:42.35px;display:flex;align-items:center;justify-content:center;text-align:center;font:8.6px/15px 'Liberation Sans', sans-serif;letter-spacing:-0.3px;color:#606266;white-space:nowrap">182.78</div>
<div style="position:absolute;left:911.6px;top:259.4px;width:1px;height:42.35px;background:#ebedf0"></div>
<div style="position:absolute;left:992.3px;top:259.4px;width:1px;height:42.35px;background:#ebedf0"></div>
<div style="position:absolute;left:992.8px;top:260.2px;width:80.70000000000005px;height:42.35px;display:flex;align-items:center;justify-content:center;text-align:center;font:8.6px/15px 'Liberation Sans', sans-serif;letter-spacing:-0.3px;color:#606266;white-space:nowrap">182.78</div>
<div style="position:absolute;left:1073.0px;top:259.4px;width:1px;height:42.35px;background:#ebedf0"></div>
<div style="position:absolute;left:1073.5px;top:260.2px;width:81.0px;height:42.35px;display:flex;align-items:center;justify-content:center;text-align:center;font:8.6px/15px 'Liberation Sans', sans-serif;letter-spacing:-0.3px;color:#606266;white-space:nowrap">1</div>
<div style="position:absolute;left:1154.0px;top:259.4px;width:1px;height:42.35px;background:#ebedf0"></div>
<div style="position:absolute;left:1163px;top:268.775px;width:85.2px;height:24px;background:#1b4ef9;border-radius:2px"></div>
<div style="position:absolute;left:1173.4px;top:274.775px;font:9.4px/12px 'Liberation Sans', sans-serif;color:#fff;white-space:nowrap">操作</div>
<svg style="position:absolute;left:1234.3px;top:279.075px;overflow:visible" width="6.4" height="3.2"><path d="M0,0 L3.2,3.2 L6.4,0" fill="none" stroke="#dfe6fd" stroke-width="1"/></svg>
<div style="position:absolute;left:179.8px;top:301.75px;width:1075.9px;height:42.35px;background:#fafafa"></div>
<div style="position:absolute;left:179.8px;top:301.55px;width:86.69999999999999px;height:42.35px;display:flex;align-items:center;justify-content:center;text-align:center;font:8.6px/15px 'Liberation Sans', sans-serif;letter-spacing:-0.3px;color:#606266;white-space:nowrap">1674830463752011<br>777</div>
<div style="position:absolute;left:266.0px;top:301.75px;width:1px;height:42.35px;background:#ebedf0"></div>
<div style="position:absolute;left:266.5px;top:302.55px;width:80.10000000000002px;height:42.35px;display:flex;align-items:center;justify-content:center;text-align:center;font:8.6px/15px 'Liberation Sans', sans-serif;letter-spacing:-0.3px;color:#606266;white-space:nowrap">test</div>
<div style="position:absolute;left:346.1px;top:301.75px;width:1px;height:42.35px;background:#ebedf0"></div>
<div style="position:absolute;left:346.6px;top:302.55px;width:80.69999999999999px;height:42.35px;display:flex;align-items:center;justify-content:center;text-align:center;font:8.6px/15px 'Liberation Sans', sans-serif;letter-spacing:-0.3px;color:#606266;white-space:nowrap">SH513030</div>
<div style="position:absolute;left:426.8px;top:301.75px;width:1px;height:42.35px;background:#ebedf0"></div>
<div style="position:absolute;left:507.9px;top:301.75px;width:1px;height:42.35px;background:#ebedf0"></div>
<div style="position:absolute;left:508.4px;top:302.55px;width:81.0px;height:42.35px;display:flex;align-items:center;justify-content:center;text-align:center;font:8.6px/15px 'Liberation Sans', sans-serif;letter-spacing:-0.3px;color:#606266;white-space:nowrap">机器人刷单</div>
<div style="position:absolute;left:588.9px;top:301.75px;width:1px;height:42.35px;background:#ebedf0"></div>
<div style="position:absolute;left:669.4px;top:301.75px;width:1px;height:42.35px;background:#ebedf0"></div>
<div style="position:absolute;left:749.8px;top:301.75px;width:1px;height:42.35px;background:#ebedf0"></div>
<div style="position:absolute;left:750.3px;top:302.55px;width:81.0px;height:42.35px;display:flex;align-items:center;justify-content:center;text-align:center;font:8.6px/15px 'Liberation Sans', sans-serif;letter-spacing:-0.3px;color:#3d8ce0;white-space:nowrap">查看信息</div>
<div style="position:absolute;left:830.8px;top:301.75px;width:1px;height:42.35px;background:#ebedf0"></div>
<div style="position:absolute;left:831.3px;top:302.55px;width:80.80000000000007px;height:42.35px;display:flex;align-items:center;justify-content:center;text-align:center;font:8.6px/15px 'Liberation Sans', sans-serif;letter-spacing:-0.3px;color:#606266;white-space:nowrap">182.78</div>
<div style="position:absolute;left:911.6px;top:301.75px;width:1px;height:42.35px;background:#ebedf0"></div>
<div style="position:absolute;left:992.3px;top:301.75px;width:1px;height:42.35px;background:#ebedf0"></div>
<div style="position:absolute;left:992.8px;top:302.55px;width:80.70000000000005px;height:42.35px;display:flex;align-items:center;justify-content:center;text-align:center;font:8.6px/15px 'Liberation Sans', sans-serif;letter-spacing:-0.3px;color:#606266;white-space:nowrap">182.78</div>
<div style="position:absolute;left:1073.0px;top:301.75px;width:1px;height:42.35px;background:#ebedf0"></div>
<div style="position:absolute;left:1073.5px;top:302.55px;width:81.0px;height:42.35px;display:flex;align-items:center;justify-content:center;text-align:center;font:8.6px/15px 'Liberation Sans', sans-serif;letter-spacing:-0.3px;color:#606266;white-space:nowrap">1</div>
<div style="position:absolute;left:1154.0px;top:301.75px;width:1px;height:42.35px;background:#ebedf0"></div>
<div style="position:absolute;left:1163px;top:311.125px;width:85.2px;height:24px;background:#1b4ef9;border-radius:2px"></div>
<div style="position:absolute;left:1173.4px;top:317.125px;font:9.4px/12px 'Liberation Sans', sans-serif;color:#fff;white-space:nowrap">操作</div>
<svg style="position:absolute;left:1234.3px;top:321.425px;overflow:visible" width="6.4" height="3.2"><path d="M0,0 L3.2,3.2 L6.4,0" fill="none" stroke="#dfe6fd" stroke-width="1"/></svg>
<div style="position:absolute;left:179.8px;top:344.1px;width:1075.9px;height:42.35px;background:#fff"></div>
<div style="position:absolute;left:179.8px;top:343.90000000000003px;width:86.69999999999999px;height:42.35px;display:flex;align-items:center;justify-content:center;text-align:center;font:8.6px/15px 'Liberation Sans', sans-serif;letter-spacing:-0.3px;color:#606266;white-space:nowrap">1674827882141134<br>849</div>
<div style="position:absolute;left:266.0px;top:344.1px;width:1px;height:42.35px;background:#ebedf0"></div>
<div style="position:absolute;left:266.5px;top:344.90000000000003px;width:80.10000000000002px;height:42.35px;display:flex;align-items:center;justify-content:center;text-align:center;font:8.6px/15px 'Liberation Sans', sans-serif;letter-spacing:-0.3px;color:#606266;white-space:nowrap">1</div>
<div style="position:absolute;left:346.1px;top:344.1px;width:1px;height:42.35px;background:#ebedf0"></div>
<div style="position:absolute;left:346.6px;top:344.90000000000003px;width:80.69999999999999px;height:42.35px;display:flex;align-items:center;justify-content:center;text-align:center;font:8.6px/15px 'Liberation Sans', sans-serif;letter-spacing:-0.3px;color:#606266;white-space:nowrap">SH513030</div>
<div style="position:absolute;left:426.8px;top:344.1px;width:1px;height:42.35px;background:#ebedf0"></div>
<div style="position:absolute;left:507.9px;top:344.1px;width:1px;height:42.35px;background:#ebedf0"></div>
<div style="position:absolute;left:508.4px;top:344.90000000000003px;width:81.0px;height:42.35px;display:flex;align-items:center;justify-content:center;text-align:center;font:8.6px/15px 'Liberation Sans', sans-serif;letter-spacing:-0.3px;color:#606266;white-space:nowrap">机器人刷单</div>
<div style="position:absolute;left:588.9px;top:344.1px;width:1px;height:42.35px;background:#ebedf0"></div>
<div style="position:absolute;left:669.4px;top:344.1px;width:1px;height:42.35px;background:#ebedf0"></div>
<div style="position:absolute;left:749.8px;top:344.1px;width:1px;height:42.35px;background:#ebedf0"></div>
<div style="position:absolute;left:750.3px;top:344.90000000000003px;width:81.0px;height:42.35px;display:flex;align-items:center;justify-content:center;text-align:center;font:8.6px/15px 'Liberation Sans', sans-serif;letter-spacing:-0.3px;color:#3d8ce0;white-space:nowrap">查看信息</div>
<div style="position:absolute;left:830.8px;top:344.1px;width:1px;height:42.35px;background:#ebedf0"></div>
<div style="position:absolute;left:831.3px;top:344.90000000000003px;width:80.80000000000007px;height:42.35px;display:flex;align-items:center;justify-content:center;text-align:center;font:8.6px/15px 'Liberation Sans', sans-serif;letter-spacing:-0.3px;color:#606266;white-space:nowrap">182.78</div>
<div style="position:absolute;left:911.6px;top:344.1px;width:1px;height:42.35px;background:#ebedf0"></div>
<div style="position:absolute;left:992.3px;top:344.1px;width:1px;height:42.35px;background:#ebedf0"></div>
<div style="position:absolute;left:992.8px;top:344.90000000000003px;width:80.70000000000005px;height:42.35px;display:flex;align-items:center;justify-content:center;text-align:center;font:8.6px/15px 'Liberation Sans', sans-serif;letter-spacing:-0.3px;color:#606266;white-space:nowrap">182.78</div>
<div style="position:absolute;left:1073.0px;top:344.1px;width:1px;height:42.35px;background:#ebedf0"></div>
<div style="position:absolute;left:1073.5px;top:344.90000000000003px;width:81.0px;height:42.35px;display:flex;align-items:center;justify-content:center;text-align:center;font:8.6px/15px 'Liberation Sans', sans-serif;letter-spacing:-0.3px;color:#606266;white-space:nowrap">1</div>
<div style="position:absolute;left:1154.0px;top:344.1px;width:1px;height:42.35px;background:#ebedf0"></div>
<div style="position:absolute;left:1163px;top:353.475px;width:85.2px;height:24px;background:#1b4ef9;border-radius:2px"></div>
<div style="position:absolute;left:1173.4px;top:359.475px;font:9.4px/12px 'Liberation Sans', sans-serif;color:#fff;white-space:nowrap">操作</div>
<svg style="position:absolute;left:1234.3px;top:363.77500000000003px;overflow:visible" width="6.4" height="3.2"><path d="M0,0 L3.2,3.2 L6.4,0" fill="none" stroke="#dfe6fd" stroke-width="1"/></svg>
<div style="position:absolute;left:179.8px;top:386.45000000000005px;width:1075.9px;height:42.35px;background:#fafafa"></div>
<div style="position:absolute;left:179.8px;top:386.25000000000006px;width:86.69999999999999px;height:42.35px;display:flex;align-items:center;justify-content:center;text-align:center;font:8.6px/15px 'Liberation Sans', sans-serif;letter-spacing:-0.3px;color:#606266;white-space:nowrap">1674827091234795<br>521</div>
<div style="position:absolute;left:266.0px;top:386.45000000000005px;width:1px;height:42.35px;background:#ebedf0"></div>
<div style="position:absolute;left:266.5px;top:387.25000000000006px;width:80.10000000000002px;height:42.35px;display:flex;align-items:center;justify-content:center;text-align:center;font:8.6px/15px 'Liberation Sans', sans-serif;letter-spacing:-0.3px;color:#606266;white-space:nowrap">1</div>
<div style="position:absolute;left:346.1px;top:386.45000000000005px;width:1px;height:42.35px;background:#ebedf0"></div>
<div style="position:absolute;left:346.6px;top:387.25000000000006px;width:80.69999999999999px;height:42.35px;display:flex;align-items:center;justify-content:center;text-align:center;font:8.6px/15px 'Liberation Sans', sans-serif;letter-spacing:-0.3px;color:#606266;white-space:nowrap">SH513030</div>
<div style="position:absolute;left:426.8px;top:386.45000000000005px;width:1px;height:42.35px;background:#ebedf0"></div>
<div style="position:absolute;left:507.9px;top:386.45000000000005px;width:1px;height:42.35px;background:#ebedf0"></div>
<div style="position:absolute;left:508.4px;top:387.25000000000006px;width:81.0px;height:42.35px;display:flex;align-items:center;justify-content:center;text-align:center;font:8.6px/15px 'Liberation Sans', sans-serif;letter-spacing:-0.3px;color:#606266;white-space:nowrap">机器人刷单</div>
<div style="position:absolute;left:588.9px;top:386.45000000000005px;width:1px;height:42.35px;background:#ebedf0"></div>
<div style="position:absolute;left:669.4px;top:386.45000000000005px;width:1px;height:42.35px;background:#ebedf0"></div>
<div style="position:absolute;left:749.8px;top:386.45000000000005px;width:1px;height:42.35px;background:#ebedf0"></div>
<div style="position:absolute;left:750.3px;top:387.25000000000006px;width:81.0px;height:42.35px;display:flex;align-items:center;justify-content:center;text-align:center;font:8.6px/15px 'Liberation Sans', sans-serif;letter-spacing:-0.3px;color:#3d8ce0;white-space:nowrap">查看信息</div>
<div style="position:absolute;left:830.8px;top:386.45000000000005px;width:1px;height:42.35px;background:#ebedf0"></div>
<div style="position:absolute;left:831.3px;top:387.25000000000006px;width:80.80000000000007px;height:42.35px;display:flex;align-items:center;justify-content:center;text-align:center;font:8.6px/15px 'Liberation Sans', sans-serif;letter-spacing:-0.3px;color:#606266;white-space:nowrap">182.78</div>
<div style="position:absolute;left:911.6px;top:386.45000000000005px;width:1px;height:42.35px;background:#ebedf0"></div>
<div style="position:absolute;left:992.3px;top:386.45000000000005px;width:1px;height:42.35px;background:#ebedf0"></div>
<div style="position:absolute;left:992.8px;top:387.25000000000006px;width:80.70000000000005px;height:42.35px;display:flex;align-items:center;justify-content:center;text-align:center;font:8.6px/15px 'Liberation Sans', sans-serif;letter-spacing:-0.3px;color:#606266;white-space:nowrap">182.78</div>
<div style="position:absolute;left:1073.0px;top:386.45000000000005px;width:1px;height:42.35px;background:#ebedf0"></div>
<div style="position:absolute;left:1073.5px;top:387.25000000000006px;width:81.0px;height:42.35px;display:flex;align-items:center;justify-content:center;text-align:center;font:8.6px/15px 'Liberation Sans', sans-serif;letter-spacing:-0.3px;color:#606266;white-space:nowrap">1</div>
<div style="position:absolute;left:1154.0px;top:386.45000000000005px;width:1px;height:42.35px;background:#ebedf0"></div>
<div style="position:absolute;left:1163px;top:395.82500000000005px;width:85.2px;height:24px;background:#1b4ef9;border-radius:2px"></div>
<div style="position:absolute;left:1173.4px;top:401.82500000000005px;font:9.4px/12px 'Liberation Sans', sans-serif;color:#fff;white-space:nowrap">操作</div>
<svg style="position:absolute;left:1234.3px;top:406.12500000000006px;overflow:visible" width="6.4" height="3.2"><path d="M0,0 L3.2,3.2 L6.4,0" fill="none" stroke="#dfe6fd" stroke-width="1"/></svg>
<div style="position:absolute;left:179.8px;top:428.80000000000007px;width:1075.9px;height:42.35px;background:#fff"></div>
<div style="position:absolute;left:179.8px;top:428.6000000000001px;width:86.69999999999999px;height:42.35px;display:flex;align-items:center;justify-content:center;text-align:center;font:8.6px/15px 'Liberation Sans', sans-serif;letter-spacing:-0.3px;color:#606266;white-space:nowrap">1674825811874623<br>489</div>
<div style="position:absolute;left:266.0px;top:428.80000000000007px;width:1px;height:42.35px;background:#ebedf0"></div>
<div style="position:absolute;left:266.5px;top:429.6000000000001px;width:80.10000000000002px;height:42.35px;display:flex;align-items:center;justify-content:center;text-align:center;font:8.6px/15px 'Liberation Sans', sans-serif;letter-spacing:-0.3px;color:#606266;white-space:nowrap">test1</div>
<div style="position:absolute;left:346.1px;top:428.80000000000007px;width:1px;height:42.35px;background:#ebedf0"></div>
<div style="position:absolute;left:346.6px;top:429.6000000000001px;width:80.69999999999999px;height:42.35px;display:flex;align-items:center;justify-content:center;text-align:center;font:8.6px/15px 'Liberation Sans', sans-serif;letter-spacing:-0.3px;color:#606266;white-space:nowrap">SH513030</div>
<div style="position:absolute;left:426.8px;top:428.80000000000007px;width:1px;height:42.35px;background:#ebedf0"></div>
<div style="position:absolute;left:507.9px;top:428.80000000000007px;width:1px;height:42.35px;background:#ebedf0"></div>
<div style="position:absolute;left:508.4px;top:429.6000000000001px;width:81.0px;height:42.35px;display:flex;align-items:center;justify-content:center;text-align:center;font:8.6px/15px 'Liberation Sans', sans-serif;letter-spacing:-0.3px;color:#606266;white-space:nowrap">机器人刷单</div>
<div style="position:absolute;left:588.9px;top:428.80000000000007px;width:1px;height:42.35px;background:#ebedf0"></div>
<div style="position:absolute;left:669.4px;top:428.80000000000007px;width:1px;height:42.35px;background:#ebedf0"></div>
<div style="position:absolute;left:749.8px;top:428.80000000000007px;width:1px;height:42.35px;background:#ebedf0"></div>
<div style="position:absolute;left:750.3px;top:429.6000000000001px;width:81.0px;height:42.35px;display:flex;align-items:center;justify-content:center;text-align:center;font:8.6px/15px 'Liberation Sans', sans-serif;letter-spacing:-0.3px;color:#3d8ce0;white-space:nowrap">查看信息</div>
<div style="position:absolute;left:830.8px;top:428.80000000000007px;width:1px;height:42.35px;background:#ebedf0"></div>
<div style="position:absolute;left:831.3px;top:429.6000000000001px;width:80.80000000000007px;height:42.35px;display:flex;align-items:center;justify-content:center;text-align:center;font:8.6px/15px 'Liberation Sans', sans-serif;letter-spacing:-0.3px;color:#606266;white-space:nowrap">182.78</div>
<div style="position:absolute;left:911.6px;top:428.80000000000007px;width:1px;height:42.35px;background:#ebedf0"></div>
<div style="position:absolute;left:992.3px;top:428.80000000000007px;width:1px;height:42.35px;background:#ebedf0"></div>
<div style="position:absolute;left:992.8px;top:429.6000000000001px;width:80.70000000000005px;height:42.35px;display:flex;align-items:center;justify-content:center;text-align:center;font:8.6px/15px 'Liberation Sans', sans-serif;letter-spacing:-0.3px;color:#606266;white-space:nowrap">182.78</div>
<div style="position:absolute;left:1073.0px;top:428.80000000000007px;width:1px;height:42.35px;background:#ebedf0"></div>
<div style="position:absolute;left:1073.5px;top:429.6000000000001px;width:81.0px;height:42.35px;display:flex;align-items:center;justify-content:center;text-align:center;font:8.6px/15px 'Liberation Sans', sans-serif;letter-spacing:-0.3px;color:#606266;white-space:nowrap">1</div>
<div style="position:absolute;left:1154.0px;top:428.80000000000007px;width:1px;height:42.35px;background:#ebedf0"></div>
<div style="position:absolute;left:1163px;top:438.17500000000007px;width:85.2px;height:24px;background:#1b4ef9;border-radius:2px"></div>
<div style="position:absolute;left:1173.4px;top:444.17500000000007px;font:9.4px/12px 'Liberation Sans', sans-serif;color:#fff;white-space:nowrap">操作</div>
<svg style="position:absolute;left:1234.3px;top:448.4750000000001px;overflow:visible" width="6.4" height="3.2"><path d="M0,0 L3.2,3.2 L6.4,0" fill="none" stroke="#dfe6fd" stroke-width="1"/></svg>
<div style="position:absolute;left:179.8px;top:471.1500000000001px;width:1075.9px;height:42.35px;background:#fafafa"></div>
<div style="position:absolute;left:179.8px;top:470.9500000000001px;width:86.69999999999999px;height:42.35px;display:flex;align-items:center;justify-content:center;text-align:center;font:8.6px/15px 'Liberation Sans', sans-serif;letter-spacing:-0.3px;color:#606266;white-space:nowrap">1674469615280930<br>817</div>
<div style="position:absolute;left:266.0px;top:471.1500000000001px;width:1px;height:42.35px;background:#ebedf0"></div>
<div style="position:absolute;left:266.5px;top:471.9500000000001px;width:80.10000000000002px;height:42.35px;display:flex;align-items:center;justify-content:center;text-align:center;font:8.6px/15px 'Liberation Sans', sans-serif;letter-spacing:-0.3px;color:#606266;white-space:nowrap">testZL</div>
<div style="position:absolute;left:346.1px;top:471.1500000000001px;width:1px;height:42.35px;background:#ebedf0"></div>
<div style="position:absolute;left:346.6px;top:471.9500000000001px;width:80.69999999999999px;height:42.35px;display:flex;align-items:center;justify-content:center;text-align:center;font:8.6px/15px 'Liberation Sans', sans-serif;letter-spacing:-0.3px;color:#606266;white-space:nowrap">SH513030</div>
<div style="position:absolute;left:426.8px;top:471.1500000000001px;width:1px;height:42.35px;background:#ebedf0"></div>
<div style="position:absolute;left:507.9px;top:471.1500000000001px;width:1px;height:42.35px;background:#ebedf0"></div>
<div style="position:absolute;left:508.4px;top:471.9500000000001px;width:81.0px;height:42.35px;display:flex;align-items:center;justify-content:center;text-align:center;font:8.6px/15px 'Liberation Sans', sans-serif;letter-spacing:-0.3px;color:#606266;white-space:nowrap">机器人刷单</div>
<div style="position:absolute;left:588.9px;top:471.1500000000001px;width:1px;height:42.35px;background:#ebedf0"></div>
<div style="position:absolute;left:669.4px;top:471.1500000000001px;width:1px;height:42.35px;background:#ebedf0"></div>
<div style="position:absolute;left:749.8px;top:471.1500000000001px;width:1px;height:42.35px;background:#ebedf0"></div>
<div style="position:absolute;left:750.3px;top:471.9500000000001px;width:81.0px;height:42.35px;display:flex;align-items:center;justify-content:center;text-align:center;font:8.6px/15px 'Liberation Sans', sans-serif;letter-spacing:-0.3px;color:#3d8ce0;white-space:nowrap">查看信息</div>
<div style="position:absolute;left:830.8px;top:471.1500000000001px;width:1px;height:42.35px;background:#ebedf0"></div>
<div style="position:absolute;left:831.3px;top:471.9500000000001px;width:80.80000000000007px;height:42.35px;display:flex;align-items:center;justify-content:center;text-align:center;font:8.6px/15px 'Liberation Sans', sans-serif;letter-spacing:-0.3px;color:#606266;white-space:nowrap">182.78</div>
<div style="position:absolute;left:911.6px;top:471.1500000000001px;width:1px;height:42.35px;background:#ebedf0"></div>
<div style="position:absolute;left:992.3px;top:471.1500000000001px;width:1px;height:42.35px;background:#ebedf0"></div>
<div style="position:absolute;left:992.8px;top:471.9500000000001px;width:80.70000000000005px;height:42.35px;display:flex;align-items:center;justify-content:center;text-align:center;font:8.6px/15px 'Liberation Sans', sans-serif;letter-spacing:-0.3px;color:#606266;white-space:nowrap">182.78</div>
<div style="position:absolute;left:1073.0px;top:471.1500000000001px;width:1px;height:42.35px;background:#ebedf0"></div>
<div style="position:absolute;left:1073.5px;top:471.9500000000001px;width:81.0px;height:42.35px;display:flex;align-items:center;justify-content:center;text-align:center;font:8.6px/15px 'Liberation Sans', sans-serif;letter-spacing:-0.3px;color:#606266;white-space:nowrap">1</div>
<div style="position:absolute;left:1154.0px;top:471.1500000000001px;width:1px;height:42.35px;background:#ebedf0"></div>
<div style="position:absolute;left:1163px;top:480.5250000000001px;width:85.2px;height:24px;background:#1b4ef9;border-radius:2px"></div>
<div style="position:absolute;left:1173.4px;top:486.5250000000001px;font:9.4px/12px 'Liberation Sans', sans-serif;color:#fff;white-space:nowrap">操作</div>
<svg style="position:absolute;left:1234.3px;top:490.8250000000001px;overflow:visible" width="6.4" height="3.2"><path d="M0,0 L3.2,3.2 L6.4,0" fill="none" stroke="#dfe6fd" stroke-width="1"/></svg>
<div style="position:absolute;left:179.8px;top:513.5000000000001px;width:1075.9px;height:42.35px;background:#fff"></div>
<div style="position:absolute;left:179.8px;top:513.3000000000001px;width:86.69999999999999px;height:42.35px;display:flex;align-items:center;justify-content:center;text-align:center;font:8.6px/15px 'Liberation Sans', sans-serif;letter-spacing:-0.3px;color:#606266;white-space:nowrap">1673760384038756<br>353</div>
<div style="position:absolute;left:266.0px;top:513.5000000000001px;width:1px;height:42.35px;background:#ebedf0"></div>
<div style="position:absolute;left:266.5px;top:514.3000000000001px;width:80.10000000000002px;height:42.35px;display:flex;align-items:center;justify-content:center;text-align:center;font:8.6px/15px 'Liberation Sans', sans-serif;letter-spacing:-0.3px;color:#606266;white-space:nowrap">1</div>
<div style="position:absolute;left:346.1px;top:513.5000000000001px;width:1px;height:42.35px;background:#ebedf0"></div>
<div style="position:absolute;left:346.6px;top:514.3000000000001px;width:80.69999999999999px;height:42.35px;display:flex;align-items:center;justify-content:center;text-align:center;font:8.6px/15px 'Liberation Sans', sans-serif;letter-spacing:-0.3px;color:#606266;white-space:nowrap">SH513030</div>
<div style="position:absolute;left:426.8px;top:513.5000000000001px;width:1px;height:42.35px;background:#ebedf0"></div>
<div style="position:absolute;left:427.3px;top:513.3000000000001px;width:81.09999999999997px;height:42.35px;display:flex;align-items:center;justify-content:center;text-align:center;font:8.6px/15px 'Liberation Sans', sans-serif;letter-spacing:-0.3px;color:#606266;white-space:nowrap">00992,SZ300750,<br>Meta公司</div>
<div style="position:absolute;left:507.9px;top:513.5000000000001px;width:1px;height:42.35px;background:#ebedf0"></div>
<div style="position:absolute;left:508.4px;top:514.3000000000001px;width:81.0px;height:42.35px;display:flex;align-items:center;justify-content:center;text-align:center;font:8.6px/15px 'Liberation Sans', sans-serif;letter-spacing:-0.3px;color:#606266;white-space:nowrap">机器人刷单</div>
<div style="position:absolute;left:588.9px;top:513.5000000000001px;width:1px;height:42.35px;background:#ebedf0"></div>
<div style="position:absolute;left:669.4px;top:513.5000000000001px;width:1px;height:42.35px;background:#ebedf0"></div>
<div style="position:absolute;left:749.8px;top:513.5000000000001px;width:1px;height:42.35px;background:#ebedf0"></div>
<div style="position:absolute;left:750.3px;top:514.3000000000001px;width:81.0px;height:42.35px;display:flex;align-items:center;justify-content:center;text-align:center;font:8.6px/15px 'Liberation Sans', sans-serif;letter-spacing:-0.3px;color:#3d8ce0;white-space:nowrap">查看信息</div>
<div style="position:absolute;left:830.8px;top:513.5000000000001px;width:1px;height:42.35px;background:#ebedf0"></div>
<div style="position:absolute;left:831.3px;top:514.3000000000001px;width:80.80000000000007px;height:42.35px;display:flex;align-items:center;justify-content:center;text-align:center;font:8.6px/15px 'Liberation Sans', sans-serif;letter-spacing:-0.3px;color:#606266;white-space:nowrap">182.78</div>
<div style="position:absolute;left:911.6px;top:513.5000000000001px;width:1px;height:42.35px;background:#ebedf0"></div>
<div style="position:absolute;left:992.3px;top:513.5000000000001px;width:1px;height:42.35px;background:#ebedf0"></div>
<div style="position:absolute;left:992.8px;top:514.3000000000001px;width:80.70000000000005px;height:42.35px;display:flex;align-items:center;justify-content:center;text-align:center;font:8.6px/15px 'Liberation Sans', sans-serif;letter-spacing:-0.3px;color:#606266;white-space:nowrap">182.78</div>
<div style="position:absolute;left:1073.0px;top:513.5000000000001px;width:1px;height:42.35px;background:#ebedf0"></div>
<div style="position:absolute;left:1073.5px;top:514.3000000000001px;width:81.0px;height:42.35px;display:flex;align-items:center;justify-content:center;text-align:center;font:8.6px/15px 'Liberation Sans', sans-serif;letter-spacing:-0.3px;color:#606266;white-space:nowrap">1</div>
<div style="position:absolute;left:1154.0px;top:513.5000000000001px;width:1px;height:42.35px;background:#ebedf0"></div>
<div style="position:absolute;left:1163px;top:522.8750000000001px;width:85.2px;height:24px;background:#1b4ef9;border-radius:2px"></div>
<div style="position:absolute;left:1173.4px;top:528.8750000000001px;font:9.4px/12px 'Liberation Sans', sans-serif;color:#fff;white-space:nowrap">操作</div>
<svg style="position:absolute;left:1234.3px;top:533.1750000000001px;overflow:visible" width="6.4" height="3.2"><path d="M0,0 L3.2,3.2 L6.4,0" fill="none" stroke="#dfe6fd" stroke-width="1"/></svg>
<div style="position:absolute;left:179.8px;top:555.8500000000001px;width:1075.9px;height:57.05px;background:#fafafa"></div>
<div style="position:absolute;left:179.8px;top:555.6500000000001px;width:86.69999999999999px;height:57.05px;display:flex;align-items:center;justify-content:center;text-align:center;font:8.6px/15px 'Liberation Sans', sans-serif;letter-spacing:-0.3px;color:#606266;white-space:nowrap">1673758737707327<br>489</div>
<div style="position:absolute;left:266.0px;top:555.8500000000001px;width:1px;height:57.05px;background:#ebedf0"></div>
<div style="position:absolute;left:266.5px;top:556.6500000000001px;width:80.10000000000002px;height:57.05px;display:flex;align-items:center;justify-content:center;text-align:center;font:8.6px/15px 'Liberation Sans', sans-serif;letter-spacing:-0.3px;color:#606266;white-space:nowrap">1</div>
<div style="position:absolute;left:346.1px;top:555.8500000000001px;width:1px;height:57.05px;background:#ebedf0"></div>
<div style="position:absolute;left:346.6px;top:556.6500000000001px;width:80.69999999999999px;height:57.05px;display:flex;align-items:center;justify-content:center;text-align:center;font:8.6px/15px 'Liberation Sans', sans-serif;letter-spacing:-0.3px;color:#606266;white-space:nowrap">SH513030</div>
<div style="position:absolute;left:426.8px;top:555.8500000000001px;width:1px;height:57.05px;background:#ebedf0"></div>
<div style="position:absolute;left:427.3px;top:555.6500000000001px;width:81.09999999999997px;height:57.05px;display:flex;align-items:center;justify-content:center;text-align:center;font:8.6px/15px 'Liberation Sans', sans-serif;letter-spacing:-0.3px;color:#606266;white-space:nowrap">00992,00700,微<br>软,ATMOS能源,丰<br>田汽车,本田汽车</div>
<div style="position:absolute;left:507.9px;top:555.8500000000001px;width:1px;height:57.05px;background:#ebedf0"></div>
<div style="position:absolute;left:508.4px;top:556.6500000000001px;width:81.0px;height:57.05px;display:flex;align-items:center;justify-content:center;text-align:center;font:8.6px/15px 'Liberation Sans', sans-serif;letter-spacing:-0.3px;color:#606266;white-space:nowrap">机器人刷单</div>
<div style="position:absolute;left:588.9px;top:555.8500000000001px;width:1px;height:57.05px;background:#ebedf0"></div>
<div style="position:absolute;left:669.4px;top:555.8500000000001px;width:1px;height:57.05px;background:#ebedf0"></div>
<div style="position:absolute;left:749.8px;top:555.8500000000001px;width:1px;height:57.05px;background:#ebedf0"></div>
<div style="position:absolute;left:750.3px;top:556.6500000000001px;width:81.0px;height:57.05px;display:flex;align-items:center;justify-content:center;text-align:center;font:8.6px/15px 'Liberation Sans', sans-serif;letter-spacing:-0.3px;color:#3d8ce0;white-space:nowrap">查看信息</div>
<div style="position:absolute;left:830.8px;top:555.8500000000001px;width:1px;height:57.05px;background:#ebedf0"></div>
<div style="position:absolute;left:831.3px;top:556.6500000000001px;width:80.80000000000007px;height:57.05px;display:flex;align-items:center;justify-content:center;text-align:center;font:8.6px/15px 'Liberation Sans', sans-serif;letter-spacing:-0.3px;color:#606266;white-space:nowrap">182.78</div>
<div style="position:absolute;left:911.6px;top:555.8500000000001px;width:1px;height:57.05px;background:#ebedf0"></div>
<div style="position:absolute;left:992.3px;top:555.8500000000001px;width:1px;height:57.05px;background:#ebedf0"></div>
<div style="position:absolute;left:992.8px;top:556.6500000000001px;width:80.70000000000005px;height:57.05px;display:flex;align-items:center;justify-content:center;text-align:center;font:8.6px/15px 'Liberation Sans', sans-serif;letter-spacing:-0.3px;color:#606266;white-space:nowrap">182.78</div>
<div style="position:absolute;left:1073.0px;top:555.8500000000001px;width:1px;height:57.05px;background:#ebedf0"></div>
<div style="position:absolute;left:1073.5px;top:556.6500000000001px;width:81.0px;height:57.05px;display:flex;align-items:center;justify-content:center;text-align:center;font:8.6px/15px 'Liberation Sans', sans-serif;letter-spacing:-0.3px;color:#606266;white-space:nowrap">1</div>
<div style="position:absolute;left:1154.0px;top:555.8500000000001px;width:1px;height:57.05px;background:#ebedf0"></div>
<div style="position:absolute;left:1163px;top:572.5750000000002px;width:85.2px;height:24px;background:#1b4ef9;border-radius:2px"></div>
<div style="position:absolute;left:1173.4px;top:578.5750000000002px;font:9.4px/12px 'Liberation Sans', sans-serif;color:#fff;white-space:nowrap">操作</div>
<svg style="position:absolute;left:1234.3px;top:582.8750000000001px;overflow:visible" width="6.4" height="3.2"><path d="M0,0 L3.2,3.2 L6.4,0" fill="none" stroke="#dfe6fd" stroke-width="1"/></svg>
<div style="position:absolute;left:179.8px;top:216.85px;width:1075.9px;height:1px;background:#ebedf0"></div>
<div style="position:absolute;left:179.8px;top:259.2px;width:1075.9px;height:1px;background:#ebedf0"></div>
<div style="position:absolute;left:179.8px;top:301.55px;width:1075.9px;height:1px;background:#ebedf0"></div>
<div style="position:absolute;left:179.8px;top:343.90000000000003px;width:1075.9px;height:1px;background:#ebedf0"></div>
<div style="position:absolute;left:179.8px;top:386.25000000000006px;width:1075.9px;height:1px;background:#ebedf0"></div>
<div style="position:absolute;left:179.8px;top:428.6000000000001px;width:1075.9px;height:1px;background:#ebedf0"></div>
<div style="position:absolute;left:179.8px;top:470.9500000000001px;width:1075.9px;height:1px;background:#ebedf0"></div>
<div style="position:absolute;left:179.8px;top:513.3000000000001px;width:1075.9px;height:1px;background:#ebedf0"></div>
<div style="position:absolute;left:179.8px;top:555.6500000000001px;width:1075.9px;height:1px;background:#ebedf0"></div>
<div style="position:absolute;left:179.8px;top:612.7px;width:1075.9px;height:1px;background:#ebedf0"></div>
<div style="position:absolute;left:179.3px;top:174.7px;width:1px;height:438.2000000000001px;background:#ebedf0"></div>
<div style="position:absolute;left:1255.2px;top:174.7px;width:1px;height:438.2000000000001px;background:#ebedf0"></div>
<div style="position:absolute;left:560.3px;top:631.9px;width:64.6px;height:20px;border:1px solid #dcdfe6;border-radius:2px;background:#fff"></div>
<div style="position:absolute;left:640.6px;top:631.9px;width:19.7px;height:20px;background:#f4f4f5;border-radius:2px"></div>
<div style="position:absolute;left:667.5px;top:631.9px;width:20.3px;height:20px;background:#1b4ef9;border-radius:2px"></div>
<div style="position:absolute;left:694.7px;top:631.9px;width:20px;height:20px;background:#f4f4f5;border-radius:2px"></div>
<div style="position:absolute;left:721.25px;top:631.9px;width:20px;height:20px;background:#f4f4f5;border-radius:2px"></div>
<div style="position:absolute;left:747.8px;top:631.9px;width:20px;height:20px;background:#f4f4f5;border-radius:2px"></div>
<div style="position:absolute;left:775px;top:631.9px;width:20px;height:20px;background:#f4f4f5;border-radius:2px"></div>
<div style="position:absolute;left:801.9px;top:631.9px;width:20px;height:20px;background:#f4f4f5;border-radius:2px"></div>
<div style="position:absolute;left:829px;top:631.9px;width:20px;height:20px;background:#f4f4f5;border-radius:2px"></div>
<div style="position:absolute;left:889px;top:631.9px;width:28.7px;height:20px;border:1px solid #dcdfe6;border-radius:2px;background:#fff"></div>
</body></html>
